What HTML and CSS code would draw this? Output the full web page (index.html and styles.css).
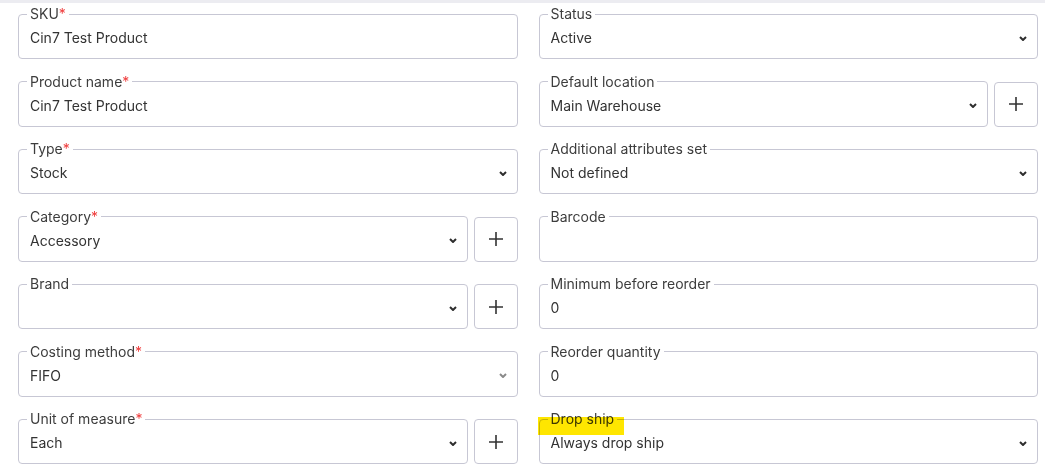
FILE: index.html
```html
<!DOCTYPE html>
<html>
<head>
<meta charset="utf-8">
<link rel="stylesheet" href="styles.css">
</head>
<body>
<div class="topbar"></div>
<div class="form">
  <div class="row">
    <fieldset class="field"><legend>SKU<span class="req">*</span></legend><div class="value">Cin7 Test Product</div></fieldset>
  </div>
  <div class="row">
    <fieldset class="field"><legend>Status</legend><div class="value">Active<svg class="chev" viewBox="0 0 8 5"><path d="M1 1L4 4L7 1"/></svg></div></fieldset>
  </div>
  <div class="row">
    <fieldset class="field"><legend>Product name<span class="req">*</span></legend><div class="value">Cin7 Test Product</div></fieldset>
  </div>
  <div class="row">
    <fieldset class="field"><legend>Default location</legend><div class="value">Main Warehouse<svg class="chev" viewBox="0 0 8 5"><path d="M1 1L4 4L7 1"/></svg></div></fieldset>
    <button class="plus"><svg viewBox="0 0 16 16"><path d="M8 1V15M1 8H15"/></svg></button>
  </div>
  <div class="row">
    <fieldset class="field"><legend>Type<span class="req">*</span></legend><div class="value">Stock<svg class="chev" viewBox="0 0 8 5"><path d="M1 1L4 4L7 1"/></svg></div></fieldset>
  </div>
  <div class="row">
    <fieldset class="field"><legend>Additional attributes set</legend><div class="value">Not defined<svg class="chev" viewBox="0 0 8 5"><path d="M1 1L4 4L7 1"/></svg></div></fieldset>
  </div>
  <div class="row">
    <fieldset class="field"><legend>Category<span class="req">*</span></legend><div class="value">Accessory<svg class="chev" viewBox="0 0 8 5"><path d="M1 1L4 4L7 1"/></svg></div></fieldset>
    <button class="plus"><svg viewBox="0 0 16 16"><path d="M8 1V15M1 8H15"/></svg></button>
  </div>
  <div class="row">
    <fieldset class="field"><legend>Barcode</legend><div class="value"></div></fieldset>
  </div>
  <div class="row">
    <fieldset class="field"><legend>Brand</legend><div class="value"><span></span><svg class="chev" viewBox="0 0 8 5"><path d="M1 1L4 4L7 1"/></svg></div></fieldset>
    <button class="plus"><svg viewBox="0 0 16 16"><path d="M8 1V15M1 8H15"/></svg></button>
  </div>
  <div class="row">
    <fieldset class="field"><legend>Minimum before reorder</legend><div class="value">0</div></fieldset>
  </div>
  <div class="row">
    <fieldset class="field"><legend>Costing method<span class="req">*</span></legend><div class="value">FIFO<svg class="chev dim" viewBox="0 0 8 5"><path d="M1 1L4 4L7 1"/></svg></div></fieldset>
  </div>
  <div class="row">
    <fieldset class="field"><legend>Reorder quantity</legend><div class="value">0</div></fieldset>
  </div>
  <div class="row">
    <fieldset class="field"><legend>Unit of measure<span class="req">*</span></legend><div class="value">Each<svg class="chev" viewBox="0 0 8 5"><path d="M1 1L4 4L7 1"/></svg></div></fieldset>
    <button class="plus"><svg viewBox="0 0 16 16"><path d="M8 1V15M1 8H15"/></svg></button>
  </div>
  <div class="row">
    <fieldset class="field highlighted"><legend>Drop ship</legend><div class="value">Always drop ship<svg class="chev" viewBox="0 0 8 5"><path d="M1 1L4 4L7 1"/></svg></div></fieldset>
  </div>
</div>
</body>
</html>
```
FILE: styles.css
```css
html, body {
  margin: 0;
  padding: 0;
  background: #fff;
  font-family: Inter, "Noto Sans", "Liberation Sans", sans-serif;
  font-size: 14px;
  color: #333;
}
.topbar {
  height: 3px;
  background: #ececf1;
}
.form {
  display: grid;
  grid-template-columns: 1fr 1fr;
  column-gap: 21px;
  row-gap: 14.5px;
  padding: 3px 7px 0 18px;
}
.row {
  display: flex;
  gap: 6px;
}
.field {
  position: relative;
  flex: 1;
  min-width: 0;
  box-sizing: border-box;
  margin: 0;
  padding: 0 11px 0 11px;
  border: 1px solid #c7c7d4;
  border-radius: 4px;
  height: 53px;
}
.field legend {
  padding: 0 3px;
  margin-left: -3px;
  font-size: 14px;
  line-height: 16px;
  color: #3d3d3d;
}
.req {
  color: #ef3b3b;
}
.value {
  height: 32px;
  display: flex;
  align-items: center;
  justify-content: space-between;
  line-height: 20px;
  color: #333;
}
.chev {
  width: 8px;
  height: 5px;
  flex: none;
  margin-right: -1px;
}
.chev path {
  fill: none;
  stroke: #2e2e2e;
  stroke-width: 2;
}
.chev.dim path {
  stroke: #8a8a8a;
}
.plus {
  flex: none;
  box-sizing: border-box;
  width: 44px;
  height: 45px;
  margin-top: 8px;
  border: 1px solid #c7c7d4;
  border-radius: 4px;
  background: #fff;
  padding: 0;
  display: flex;
  align-items: center;
  justify-content: center;
}
.plus svg {
  width: 16px;
  height: 16px;
}
.plus path {
  fill: none;
  stroke: #333;
  stroke-width: 1.6;
}
.highlighted::after {
  content: "";
  position: absolute;
  left: -2px;
  top: -10px;
  width: 86px;
  height: 18px;
  background: #ffe600;
  mix-blend-mode: multiply;
  pointer-events: none;
}
```
